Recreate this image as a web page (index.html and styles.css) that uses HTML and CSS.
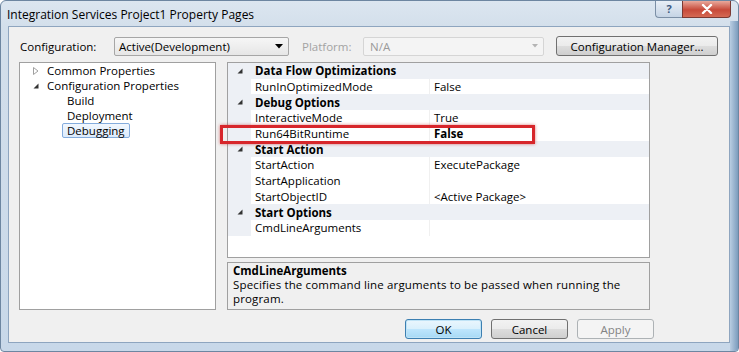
FILE: index.html
```html
<!DOCTYPE html>
<html lang="en">

<head>
    <meta charset="UTF-8">
    <title>Integration Services Project1 Property Pages</title>
    <link rel="stylesheet" href="styles.css">
</head>

<body>
    <div class="window">
        <div class="titlebar">
            <span class="title">Integration Services Project1 Property Pages</span>
            <div class="caption-buttons">
                <div class="cap-help">?</div>
                <div class="cap-close">
                    <svg width="12" height="10" viewBox="0 0 12 10">
                        <path d="M2 1 L10 9 M10 1 L2 9" stroke="#fff" stroke-width="2.4" stroke-linecap="round"/>
                    </svg>
                </div>
            </div>
        </div>

        <div class="client">
            <div class="config-row">
                <span class="label">Configuration:</span>
                <div class="combo">
                    <span>Active(Development)</span>
                    <svg width="8" height="5" viewBox="0 0 8 5"><path d="M0 0 H8 L4 4.5 Z" fill="#000"/></svg>
                </div>
                <span class="label disabled platform-label">Platform:</span>
                <div class="combo combo-disabled">
                    <span>N/A</span>
                    <svg width="6" height="4" viewBox="0 0 6 4"><path d="M0 0 H6 L3 3.5 Z" fill="#b4b4b4"/></svg>
                </div>
                <button class="btn btn-manager">Configuration Manager...</button>
            </div>

            <div class="main">
                <div class="tree">
                    <div class="tree-item">
                        <svg class="twisty" width="6" height="8" viewBox="0 0 6 8"><path d="M0.5 0.5 L5 4 L0.5 7.5 Z" fill="none" stroke="#a0a0a0"/></svg>
                        <span>Common Properties</span>
                    </div>
                    <div class="tree-item">
                        <svg class="twisty" width="6" height="8" viewBox="0 0 6 8"><path d="M5.5 1.5 V6.5 H0.5 Z" fill="#333"/></svg>
                        <span>Configuration Properties</span>
                    </div>
                    <div class="tree-item child"><span>Build</span></div>
                    <div class="tree-item child"><span>Deployment</span></div>
                    <div class="tree-item child"><span class="selected">Debugging</span></div>
                </div>

                <div class="right-pane">
                    <div class="grid">
                        <div class="row category"><span class="gutter"><svg width="6" height="6" viewBox="0 0 6 6"><path d="M5.5 0.5 V5.5 H0.5 Z" fill="#333"/></svg></span><span class="name">Data Flow Optimizations</span></div>
                        <div class="row"><span class="gutter"></span><span class="name">RunInOptimizedMode</span><span class="value">False</span></div>
                        <div class="row category"><span class="gutter"><svg width="6" height="6" viewBox="0 0 6 6"><path d="M5.5 0.5 V5.5 H0.5 Z" fill="#333"/></svg></span><span class="name">Debug Options</span></div>
                        <div class="row"><span class="gutter"></span><span class="name">InteractiveMode</span><span class="value">True</span></div>
                        <div class="row"><span class="gutter"></span><span class="name">Run64BitRuntime</span><span class="value bold">False</span></div>
                        <div class="row category"><span class="gutter"><svg width="6" height="6" viewBox="0 0 6 6"><path d="M5.5 0.5 V5.5 H0.5 Z" fill="#333"/></svg></span><span class="name">Start Action</span></div>
                        <div class="row"><span class="gutter"></span><span class="name">StartAction</span><span class="value">ExecutePackage</span></div>
                        <div class="row"><span class="gutter"></span><span class="name">StartApplication</span><span class="value"></span></div>
                        <div class="row"><span class="gutter"></span><span class="name">StartObjectID</span><span class="value">&lt;Active Package&gt;</span></div>
                        <div class="row category"><span class="gutter"><svg width="6" height="6" viewBox="0 0 6 6"><path d="M5.5 0.5 V5.5 H0.5 Z" fill="#333"/></svg></span><span class="name">Start Options</span></div>
                        <div class="row"><span class="gutter"></span><span class="name">CmdLineArguments</span><span class="value"></span></div>
                        <div class="highlight"></div>
                    </div>
                    <div class="description">
                        <div class="desc-title">CmdLineArguments</div>
                        <div class="desc-text">Specifies the command line arguments to be passed when running the program.</div>
                    </div>
                </div>
            </div>

            <div class="buttons">
                <button class="btn btn-default">OK</button>
                <button class="btn">Cancel</button>
                <button class="btn btn-disabled">Apply</button>
            </div>
        </div>
    </div>
</body>

</html>
```

FILE: styles.css
```css
body {
    margin: 0;
    font-family: "Open Sans", "Noto Sans", sans-serif;
    font-size: 11.5px;
    color: #000;
}

.window {
    width: 739px;
    height: 352px;
    box-sizing: border-box;
    background: linear-gradient(to bottom, #dce6f0 0px, #d3dfeb 26px, #c8d8e9 100%);
    border: 1px solid #6d86a1;
    border-radius: 6px 6px 4px 4px;
    display: flex;
    flex-direction: column;
    overflow: hidden;
    position: relative;
}

.window::after {
    content: "";
    position: absolute;
    top: 20px;
    right: 0;
    width: 8px;
    bottom: 0;
    background: linear-gradient(to right, #b9cde2, #7c9cbd);
}

.titlebar {
    height: 24px;
    display: flex;
    align-items: flex-start;
    padding-left: 6px;
}

.title {
    margin-top: 5px;
    font-size: 12px;
}

.caption-buttons {
    margin-left: auto;
    margin-right: 7px;
    display: flex;
}

.cap-help {
    width: 27px;
    height: 17px;
    box-sizing: border-box;
    border: 1px solid #7b8fa6;
    border-top: none;
    border-right: none;
    border-radius: 0 0 0 4px;
    background: linear-gradient(to bottom, #e9eff6, #c5d4e5);
    color: #3c5a80;
    font-weight: bold;
    font-size: 11px;
    text-align: center;
    line-height: 16px;
}

.cap-close {
    width: 49px;
    height: 17px;
    box-sizing: border-box;
    border: 1px solid #7b3a33;
    border-top: none;
    border-radius: 0 0 4px 0;
    background: linear-gradient(to bottom, #e9a99c, #c74a3a 55%, #d56a54);
    display: flex;
    align-items: center;
    justify-content: center;
}

.client {
    flex: 1;
    margin: 1px 8px 8px 7px;
    background: #f0f0f0;
    border: 1px solid #8ea5bf;
    padding: 9px 10px 0 10px;
    position: relative;
    z-index: 1;
}

.config-row {
    display: flex;
    align-items: center;
    height: 20px;
}

.label {
    width: 94px;
    padding-left: 1px;
}

.label.disabled {
    color: #a3a3a3;
}

.platform-label {
    width: 61px;
    margin-left: 12px;
}

.combo {
    width: 175px;
    height: 19px;
    box-sizing: border-box;
    border: 1px solid #a6a6a6;
    border-radius: 2px;
    background: linear-gradient(to bottom, #f6f6f6, #e6e6e6);
    display: flex;
    align-items: center;
    justify-content: space-between;
    padding: 0 5px 0 4px;
}

.combo-disabled {
    width: 181px;
    background: #f4f4f4;
    border-color: #d5d5d5;
    color: #9a9a9a;
    padding-left: 6px;
}

.btn {
    font-family: "Open Sans", "Noto Sans", sans-serif;
    font-size: 11.5px;
    height: 20px;
    width: 77px;
    padding: 0;
    box-sizing: border-box;
    border: 1px solid #707070;
    border-radius: 3px;
    background: linear-gradient(to bottom, #f2f2f2 0%, #ebebeb 50%, #dddddd 50%, #cfcfcf 100%);
    color: #000;
}

.btn-manager {
    width: 162px;
    margin-left: 12px;
}

.btn-default {
    border-color: #3c7fb1;
    box-shadow: inset 0 0 0 1px #bfe3f6;
    background: linear-gradient(to bottom, #eaf6fd 0%, #d9f0fc 50%, #bee6fd 50%, #a7d9f5 100%);
}

.btn-disabled {
    border-color: #adb2b5;
    background: #f4f4f4;
    color: #838383;
}

.main {
    display: flex;
    margin-top: 6px;
    height: 248px;
}

.tree {
    width: 197px;
    box-sizing: border-box;
    border: 1px solid #a0a0a0;
    background: #fff;
}

.tree-item {
    height: 15px;
    display: flex;
    align-items: center;
    padding-left: 13px;
}

.tree-item .twisty {
    width: 6px;
    margin-right: 8px;
}

.tree-item.child {
    padding-left: 47px;
}

.tree-item .selected {
    margin-left: -5px;
    padding: 0 4px;
    border: 1px solid #84acdd;
    border-radius: 2px;
    background: linear-gradient(to bottom, #f1f7fe, #dcebfc);
    line-height: 13px;
}

.right-pane {
    width: 423px;
    margin-left: 11px;
    display: flex;
    flex-direction: column;
}

.grid {
    height: 196px;
    box-sizing: border-box;
    border: 1px solid #a0a0a0;
    background: #fff;
    position: relative;
}

.row {
    height: 15.7px;
    display: flex;
    align-items: center;
}

.row .gutter {
    width: 22px;
    height: 100%;
    background: #edf0f5;
    display: flex;
    align-items: center;
    justify-content: center;
    padding-left: 1px;
}

.row .name {
    width: 174px;
    padding-left: 4px;
    border-right: 1px solid #f0f0f0;
    height: 100%;
    display: flex;
    align-items: center;
}

.row .value {
    padding-left: 4px;
}

.row.category {
    background: #edf0f5;
}

.row.category .name {
    font-weight: bold;
    border-right: none;
}

.bold {
    font-weight: bold;
}

.highlight {
    position: absolute;
    left: -8px;
    top: 62px;
    width: 315px;
    height: 19px;
    box-sizing: border-box;
    border: 3px solid #d7262b;
    box-shadow: 0 0 3px rgba(200, 30, 30, 0.6);
}

.description {
    margin-top: 4px;
    height: 48px;
    box-sizing: border-box;
    border: 1px solid #a0a0a0;
    background: #f0f0f0;
    padding: 1px 5px;
    line-height: 14px;
}

.desc-title {
    font-weight: bold;
}

.desc-text {
    letter-spacing: 0.15px;
}

.buttons {
    display: flex;
    gap: 9px;
    margin-top: 9px;
    margin-left: 386px;
}
```
